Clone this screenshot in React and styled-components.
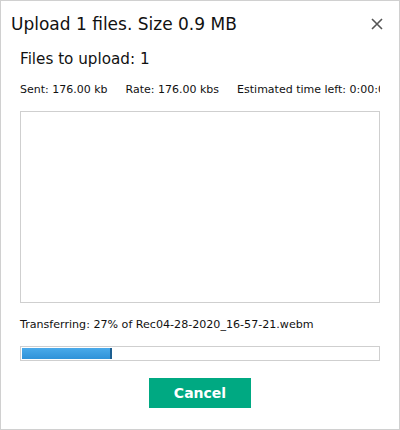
import React from 'react'
import styled, { createGlobalStyle } from 'styled-components'

const Global = createGlobalStyle`
  html, body { margin: 0; padding: 0; background: #fff; }
  body { font-family: "DejaVu Sans", Verdana, sans-serif; color: #111; }
`

const Dialog = styled.div`
  box-sizing: border-box;
  width: 400px;
  height: 430px;
  border: 1px solid #d0d0d0;
  background: #fff;
  display: flex;
  flex-direction: column;
`

const Header = styled.div`
  display: flex;
  align-items: center;
  justify-content: space-between;
  padding: 11px 15px 0 10px;
  height: 24px;
`

const Title = styled.h1`
  margin: 0;
  font-size: 17px;
  font-weight: normal;
  color: #111;
`

const Close = styled.button`
  border: 0;
  background: none;
  padding: 0;
  width: 14px;
  height: 14px;
  display: flex;
  cursor: pointer;
`

const Body = styled.div`
  display: flex;
  flex-direction: column;
  padding: 0 19px 0 19px;
`

const Count = styled.div`
  font-size: 15.2px;
  margin-top: 13px;
  line-height: 20px;
`

const Stats = styled.div`
  display: flex;
  gap: 18px;
  font-size: 11px;
  margin-top: 13px;
  line-height: 16px;
  white-space: nowrap;
  overflow: hidden;
`

const FileList = styled.div`
  box-sizing: border-box;
  height: 192px;
  border: 1px solid #cfcfcf;
  margin-top: 13px;
`

const Status = styled.div`
  font-size: 11.1px;
  line-height: 16px;
  margin-top: 14px;
`

const Track = styled.div`
  box-sizing: border-box;
  height: 15px;
  border: 1px solid #cfcfcf;
  margin-top: 13px;
  padding: 1px;
  display: flex;
`

const Fill = styled.div`
  height: 100%;
  background: linear-gradient(#4aaaea, #2f92d8);
  border-right: 2px solid #1d5f91;
  box-sizing: border-box;
`

const Actions = styled.div`
  display: flex;
  justify-content: center;
  margin-top: 17px;
`

const CancelButton = styled.button`
  width: 102px;
  height: 30px;
  border: 0;
  background: #00a982;
  color: #fff;
  font-family: "DejaVu Sans", Verdana, sans-serif;
  font-size: 14px;
  font-weight: bold;
  cursor: pointer;
`

export default function App() {
  const percent = 27
  return (
    <>
      <Global />
      <Dialog>
        <Header>
          <Title>Upload 1 files. Size 0.9 MB</Title>
          <Close aria-label="Close">
            <svg width="14" height="14" viewBox="0 0 14 14">
              <path d="M2 2L12 12M12 2L2 12" stroke="#555" strokeWidth="1.6" />
            </svg>
          </Close>
        </Header>
        <Body>
          <Count>Files to upload: 1</Count>
          <Stats>
            <span>Sent: 176.00 kb</span>
            <span>Rate: 176.00 kbs</span>
            <span>Estimated time left: 0:00:03</span>
          </Stats>
          <FileList />
          <Status>Transferring: {percent}% of Rec04-28-2020_16-57-21.webm</Status>
          <Track>
            <Fill style={{ width: `${(percent * 90) / 27}px` }} />
          </Track>
          <Actions>
            <CancelButton>Cancel</CancelButton>
          </Actions>
        </Body>
      </Dialog>
    </>
  )
}
